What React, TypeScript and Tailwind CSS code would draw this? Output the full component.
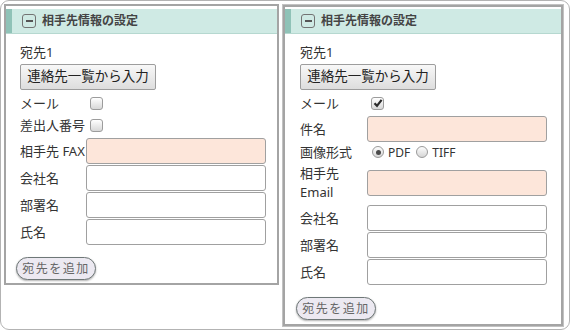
import React from 'react';

const font = { fontFamily: '"Noto Sans", "Noto Sans CJK JP", sans-serif' };

function Header() {
  return (
    <div className="flex items-center h-[25px] bg-[#cfeae4] border-b border-[#b6d8d0]">
      <div className="w-[6px] h-full bg-[#8fc2b7]"></div>
      <div className="ml-[10px] w-[14px] h-[14px] rounded-[3px] border border-[#737373] flex items-center justify-center">
        <div className="w-[7px] h-[2px] bg-[#555]"></div>
      </div>
      <span className="ml-[6px] text-[12px] font-bold text-[#444] leading-none">相手先情報の設定</span>
    </div>
  );
}

function Checkbox({ checked }: { checked?: boolean }) {
  return (
    <div className="w-[13px] h-[13px] rounded-[3px] border border-[#9c9c9c] bg-gradient-to-b from-white to-[#d8d8d8] flex items-center justify-center">
      {checked && (
        <svg width="10" height="10" viewBox="0 0 10 10">
          <path d="M1.5 5.2 L4 7.8 L8.6 1.8" fill="none" stroke="#2a2a2a" strokeWidth="2.2" />
        </svg>
      )}
    </div>
  );
}

function Radio({ checked }: { checked?: boolean }) {
  return (
    <div className="w-[12px] h-[12px] rounded-full border border-[#9a9a9a] bg-gradient-to-b from-[#fdfdfd] to-[#d6d6d6] flex items-center justify-center">
      {checked && <div className="w-[5px] h-[5px] rounded-full bg-[#4a4a4a]"></div>}
    </div>
  );
}

function Field({ peach }: { peach?: boolean }) {
  return (
    <div className={`w-[180px] h-[26px] rounded-[3px] border border-[#a0a0a0] ${peach ? 'bg-[#fde6da]' : 'bg-white'}`}></div>
  );
}

function ListButton() {
  return (
    <button className="mt-[3px] h-[26px] w-[136px] rounded-[2px] border border-[#9d9d9d] bg-gradient-to-b from-[#f8f8f8] to-[#dddddd] text-[13.5px] text-[#222] leading-none">
      連絡先一覧から入力
    </button>
  );
}

function AddButton() {
  return (
    <button className="mt-[12px] -ml-[4px] h-[23px] w-[80px] rounded-full border border-[#6e7777] bg-[#ece9f1] text-[12px] tracking-[1.5px] text-[#666] leading-none shadow-[0_1px_2px_rgba(0,0,0,0.3)]">
      宛先を追加
    </button>
  );
}

export default function App() {
  return (
    <div style={font} className="w-[570px] h-[330px] rounded-[9px] border border-[#b3b3b3] bg-white flex items-start pl-[3px] pt-[3px] gap-[3px] text-[#333]">
      {/* left panel */}
      <div className="w-[275px] h-[281px] border-2 border-[#a4a4a4] flex flex-col">
        <div className="mt-[3px]">
          <Header />
        </div>
        <div className="flex flex-col items-start pl-[14px] text-[13px]">
          <div className="mt-[9px] leading-[18px]">宛先1</div>
          <ListButton />
          <div className="mt-[4px] h-[18px] flex items-center">
            <span className="w-[70px] leading-[18px]">メール</span>
            <Checkbox />
          </div>
          <div className="mt-[4px] h-[18px] flex items-center">
            <span className="w-[70px] leading-[18px] whitespace-nowrap">差出人番号</span>
            <Checkbox />
          </div>
          <div className="mt-[4px] flex items-center">
            <span className="w-[66px] whitespace-nowrap leading-[18px]">相手先 FAX</span>
            <Field peach />
          </div>
          <div className="mt-[1px] flex items-center">
            <span className="w-[66px] leading-[18px]">会社名</span>
            <Field />
          </div>
          <div className="mt-[1px] flex items-center">
            <span className="w-[66px] leading-[18px]">部署名</span>
            <Field />
          </div>
          <div className="mt-[1px] flex items-center">
            <span className="w-[66px] leading-[18px]">氏名</span>
            <Field />
          </div>
          <AddButton />
        </div>
      </div>

      {/* right panel */}
      <div className="w-[282px] h-[323px] border border-[#c2c2c2]">
        <div className="h-full border-2 border-[#a4a4a4] flex flex-col">
          <div className="mt-[2px]">
            <Header />
          </div>
          <div className="flex flex-col items-start pl-[15px] text-[13px]">
            <div className="mt-[9px] leading-[18px]">宛先1</div>
            <ListButton />
            <div className="mt-[4px] h-[18px] flex items-center">
              <span className="w-[71px] leading-[18px]">メール</span>
              <Checkbox checked />
            </div>
            <div className="mt-[4px] flex items-center">
              <span className="w-[67px] leading-[18px]">件名</span>
              <Field peach />
            </div>
            <div className="mt-[1px] h-[18px] flex items-center">
              <span className="w-[72px] leading-[18px]">画像形式</span>
              <Radio checked />
              <span className="ml-[4px] mt-[2px] text-[12px] leading-none">PDF</span>
              <div className="ml-[6px]">
                <Radio />
              </div>
              <span className="ml-[4px] mt-[2px] text-[12px] leading-none">TIFF</span>
            </div>
            <div className="mt-[3px] flex items-center">
              <div className="w-[67px] leading-[19px]">
                相手先
                <br />
                Email
              </div>
              <Field peach />
            </div>
            <div className="mt-[3px] flex items-center">
              <span className="w-[67px] leading-[18px]">会社名</span>
              <Field />
            </div>
            <div className="mt-[1px] flex items-center">
              <span className="w-[67px] leading-[18px]">部署名</span>
              <Field />
            </div>
            <div className="mt-[1px] flex items-center">
              <span className="w-[67px] leading-[18px]">氏名</span>
              <Field />
            </div>
            <AddButton />
          </div>
        </div>
      </div>
    </div>
  );
}
